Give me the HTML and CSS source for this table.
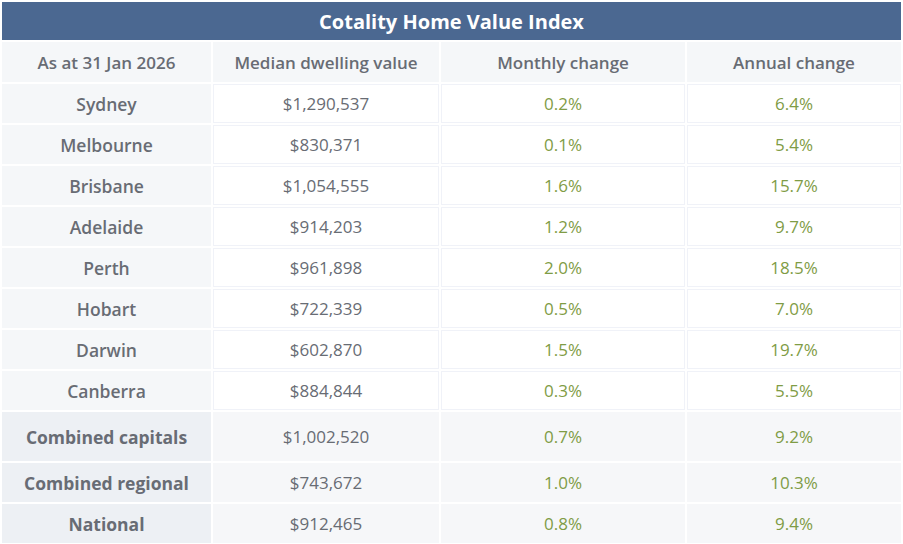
FILE: index.html
```html
<!DOCTYPE html>
<html lang="en">
<head>
<meta charset="utf-8">
<title>Cotality Home Value Index</title>
<link rel="stylesheet" href="styles.css">
</head>
<body>
<table class="hvi">
  <colgroup>
    <col class="c1"><col class="c2"><col class="c3"><col class="c4">
  </colgroup>
  <thead>
    <tr><th class="title" colspan="4">Cotality Home Value Index</th></tr>
    <tr class="head">
      <th>As at 31 Jan 2026</th>
      <th>Median dwelling value</th>
      <th>Monthly change</th>
      <th>Annual change</th>
    </tr>
  </thead>
  <tbody>
    <tr><th>Sydney</th><td>$1,290,537</td><td class="pos">0.2%</td><td class="pos">6.4%</td></tr>
    <tr><th>Melbourne</th><td>$830,371</td><td class="pos">0.1%</td><td class="pos">5.4%</td></tr>
    <tr><th>Brisbane</th><td>$1,054,555</td><td class="pos">1.6%</td><td class="pos">15.7%</td></tr>
    <tr><th>Adelaide</th><td>$914,203</td><td class="pos">1.2%</td><td class="pos">9.7%</td></tr>
    <tr><th>Perth</th><td>$961,898</td><td class="pos">2.0%</td><td class="pos">18.5%</td></tr>
    <tr><th>Hobart</th><td>$722,339</td><td class="pos">0.5%</td><td class="pos">7.0%</td></tr>
    <tr><th>Darwin</th><td>$602,870</td><td class="pos">1.5%</td><td class="pos">19.7%</td></tr>
    <tr><th>Canberra</th><td>$884,844</td><td class="pos">0.3%</td><td class="pos">5.5%</td></tr>
    <tr class="sum tall"><th>Combined capitals</th><td>$1,002,520</td><td class="pos">0.7%</td><td class="pos">9.2%</td></tr>
    <tr class="sum"><th>Combined regional</th><td>$743,672</td><td class="pos">1.0%</td><td class="pos">10.3%</td></tr>
    <tr class="sum"><th>National</th><td>$912,465</td><td class="pos">0.8%</td><td class="pos">9.4%</td></tr>
  </tbody>
</table>
</body>
</html>
```
FILE: styles.css
```css
html, body {
  margin: 0;
  padding: 0;
  background: #ffffff;
}

.hvi {
  width: 903px;
  border-collapse: separate;
  border-spacing: 2px;
  table-layout: fixed;
  font-family: "Open Sans", "Noto Sans", sans-serif;
  color: #686c74;
  font-size: 17px;
}

.c1 { width: 209px; }
.c2 { width: 226px; }
.c3 { width: 244px; }
.c4 { width: 214px; }

.hvi th,
.hvi td {
  padding: 0;
  text-align: center;
  vertical-align: middle;
  height: 39px;
  box-sizing: border-box;
}

.hvi .title {
  height: 38px;
  background: #4b6891;
  color: #ffffff;
  font-size: 20px;
  font-weight: 700;
}

.head th {
  background: #f5f7f9;
  font-weight: 600;
  font-size: 17px;
  height: 40px;
  padding-top: 0;
}

tbody th {
  background: #f5f7f9;
  font-weight: 600;
  font-size: 17.5px;
}

tbody td {
  background: #ffffff;
  border: 1px solid #f0f2f8;
  font-size: 17px;
}

.pos {
  color: #7f9c45;
}

.sum th {
  background: #edf0f4;
  font-weight: 700;
  font-size: 17.5px;
}

.sum td {
  background: #f6f7f9;
  border-color: #f6f7f9;
}

.sum.tall th,
.sum.tall td {
  height: 49px;
}
```
